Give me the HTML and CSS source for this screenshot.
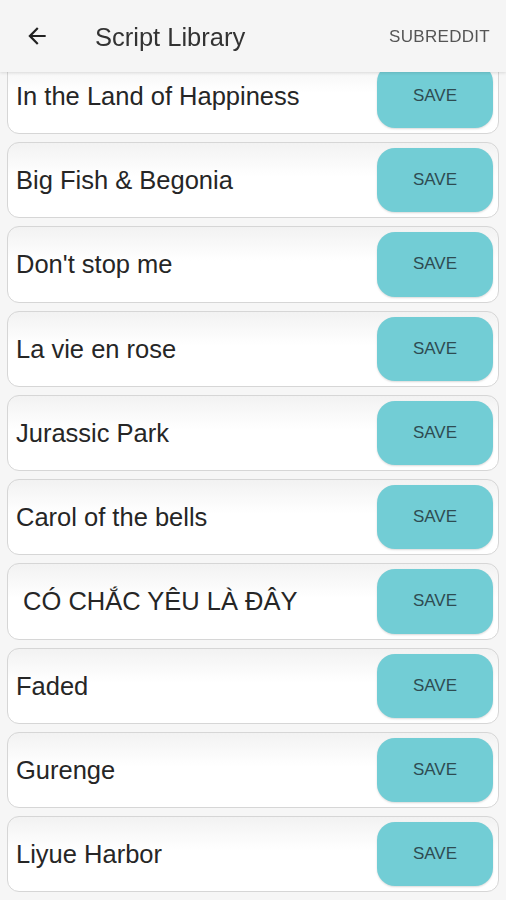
FILE: index.html
```html
<!DOCTYPE html>
<html lang="en">
<head>
<meta charset="UTF-8">
<meta name="viewport" content="width=device-width, initial-scale=1.0">
<title>Script Library</title>
<link rel="stylesheet" href="styles.css">
</head>
<body>

<header class="topbar">
    <button class="back" aria-label="Back">
        <svg width="26" height="26" viewBox="0 0 24 24"><path d="M20 11H7.83l5.59-5.59L12 4l-8 8 8 8 1.41-1.41L7.83 13H20v-2z" fill="#222"/></svg>
    </button>
    <h1 class="title">Script Library</h1>
    <span class="action">SUBREDDIT</span>
</header>

<ul class="script-list">
    <li class="script"><span class="name">In the Land of Happiness</span><button class="save">SAVE</button></li>
    <li class="script"><span class="name">Big Fish &amp; Begonia</span><button class="save">SAVE</button></li>
    <li class="script"><span class="name">Don't stop me</span><button class="save">SAVE</button></li>
    <li class="script"><span class="name">La vie en rose</span><button class="save">SAVE</button></li>
    <li class="script"><span class="name">Jurassic Park</span><button class="save">SAVE</button></li>
    <li class="script"><span class="name">Carol of the bells</span><button class="save">SAVE</button></li>
    <li class="script"><span class="name">&nbsp;CÓ CHẮC YÊU LÀ ĐÂY</span><button class="save">SAVE</button></li>
    <li class="script"><span class="name">Faded</span><button class="save">SAVE</button></li>
    <li class="script"><span class="name">Gurenge</span><button class="save">SAVE</button></li>
    <li class="script"><span class="name">Liyue Harbor</span><button class="save">SAVE</button></li>
</ul>

</body>
</html>
```

FILE: styles.css
```css
body {
    font-family: "Liberation Sans", Arial, sans-serif;
    margin: 0;
    padding: 0;
    background-color: #f6f6f6;
    color: #222;
}
.topbar {
    position: fixed;
    top: 0;
    left: 0;
    right: 0;
    height: 72px;
    display: flex;
    align-items: center;
    background-color: #f5f5f5;
    box-shadow: 0 1px 3px rgba(0, 0, 0, 0.12);
    z-index: 2;
}
.back {
    background: none;
    border: none;
    padding: 0;
    margin-left: 24px;
    width: 26px;
    height: 26px;
    display: flex;
}
.title {
    flex: 1;
    margin: 2px 0 0 45px;
    font-size: 25.5px;
    font-weight: normal;
    color: #333;
}
.action {
    font-size: 17px;
    color: #555;
    margin: 2px 16px 0 0;
    letter-spacing: 0.3px;
}
.script-list {
    list-style-type: none;
    margin: 0;
    padding: 57.75px 7px 8px;
    display: flex;
    flex-direction: column;
    gap: 8px;
}
.script {
    height: 76.25px;
    box-sizing: border-box;
    display: flex;
    align-items: center;
    justify-content: space-between;
    padding: 5px 5px 5px 8px;
    background: linear-gradient(#f2f2f2, #ffffff 45%);
    border: 1px solid #d6d6d6;
    border-radius: 12px;
}
.name {
    font-size: 25.5px;
    color: #262626;
    white-space: pre;
    margin-top: 1px;
}
.save {
    width: 116px;
    height: 100%;
    background-color: #72cdd5;
    color: #2e4c52;
    border: none;
    border-radius: 18px;
    font-family: "Liberation Sans", Arial, sans-serif;
    font-size: 17px;
    box-shadow: 0 1px 2px rgba(0, 0, 0, 0.15);
}
```
